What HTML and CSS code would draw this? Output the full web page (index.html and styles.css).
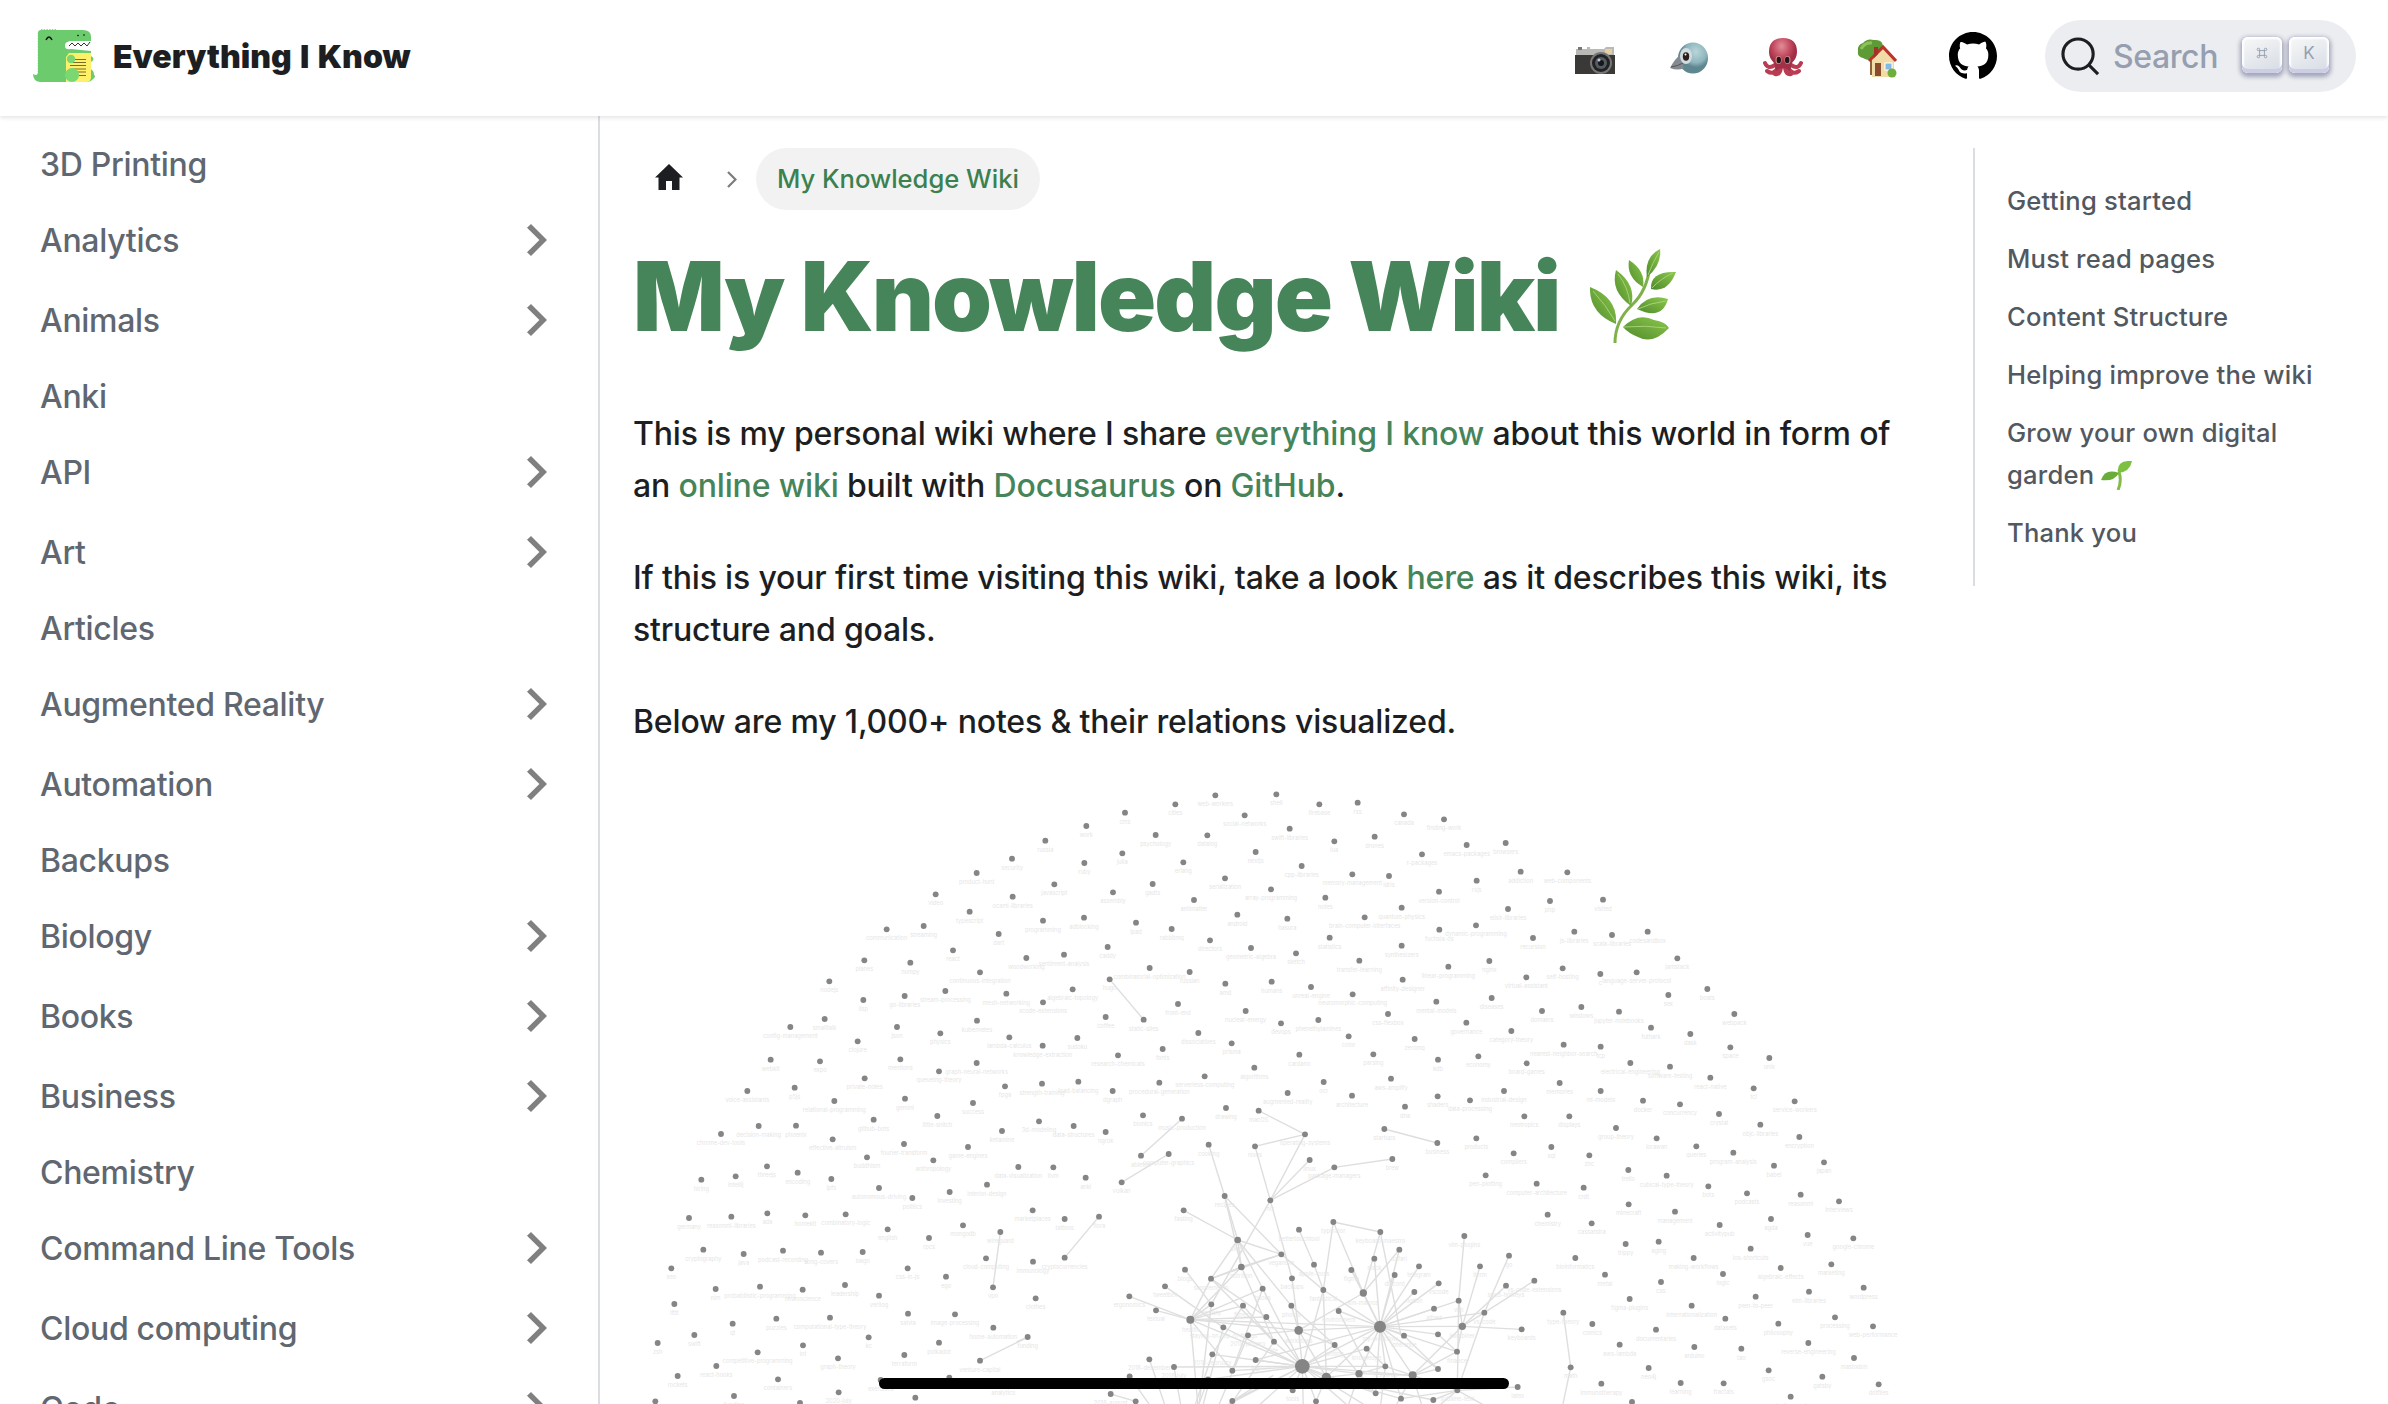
FILE: index.html
```html
<!DOCTYPE html>
<html lang="en">
<head>
<meta charset="utf-8">
<title>My Knowledge Wiki | Everything I Know</title>
<link rel="stylesheet" href="styles.css">
</head>
<body>
<header class="navbar">
  <a class="brand">
    <svg class="logo" viewBox="0 0 64 54">
      <path d="M5 4Q5 1 8 1H50Q58 1 58 8V12H38Q32 13 32 17T38 20L58 22V24H36V53H7Q0 52 0 45Q5 48 5 42Z" fill="#6bcb6d"/>
      <path d="M6 43V3M8 1.500H24" fill="none" stroke="#6bcb6d" stroke-width="2.500" stroke-dasharray="1.500 1.200"/>
      <path d="M58 27Q63 30 58 33ZM57 40Q61 41 61 46Q64 47 59 51Q57 53 52 53Z" fill="#6bcb6d"/>
      <path d="M38 12H58L57 17Q57 19 54 19H38Q32 19 32 16T38 12Z" fill="#fff"/>
      <path d="M36 17l3-3 3 3 3-3 3 3 3-3 3 3 3-4" fill="none" stroke="#333" stroke-width="1"/>
      <path d="M36 24H58V48Q58 53 53 53H33V28Z" fill="#fff06a"/>
      <path d="M37 30.500H53M37 33.500H53M37 36.500H53M38 40H53M44 43H53M46 46.500H53" stroke="#7a6c25" stroke-width="1"/>
      <circle cx="38" cy="30" r="4.200" fill="#7ad873"/><circle cx="39" cy="46" r="7" fill="#7ad873"/>
      <path d="M13 11Q16 5 19 11" fill="none" stroke="#111" stroke-width="1.500"/>
      <circle cx="45" cy="6.500" r=".8"/><circle cx="51" cy="6" r=".8"/>
    </svg>
    <b class="brand-title">Everything I Know</b>
  </a>
  <nav class="nav-icons">
    <svg class="emoji camera" viewBox="0 0 40 28">
      <path d="M1 2H12V0H15V2H29L31 0H39V27H1Z" fill="#b9b9b5"/><path d="M0 8H40V27H0Z" fill="#3a3938"/>
      <rect x="30" y="2" width="7" height="5" fill="#e8cf9d"/><rect x="3" y="0" width="4" height="3" fill="#777"/>
      <circle cx="26" cy="16" r="11" fill="#777"/><circle cx="26" cy="16" r="9" fill="#222"/><circle cx="26" cy="16" r="6" fill="#555b62"/><circle cx="26" cy="16" r="3" fill="#15171b"/><circle cx="24" cy="13" r="1.500" fill="#b9c7d2"/>
    </svg>
    <svg class="emoji bird" viewBox="0 0 38 32">
      <defs><radialGradient id="bird" cx=".6" cy=".3"><stop offset="0" stop-color="#b9d5da"/><stop offset=".7" stop-color="#8fb5bd"/><stop offset="1" stop-color="#5f8790"/></radialGradient></defs>
      <ellipse cx="23" cy="16" rx="15" ry="15.500" fill="url(#bird)"/><path d="M10 13Q4 18 0 26Q8 29 14 26Z" fill="#858a90"/><path d="M1 25Q8 24 13 21" stroke="#555" fill="none"/>
      <ellipse cx="16" cy="14" rx="6" ry="8" fill="#d0dcdf"/><ellipse cx="16" cy="14.500" rx="3.200" ry="4.200" fill="#2b1d1a"/><circle cx="15.500" cy="12.500" r="1" fill="#fff"/>
    </svg>
    <svg class="emoji octopus" viewBox="0 0 40 39">
      <defs><radialGradient id="octo" cx=".45" cy=".25"><stop offset="0" stop-color="#e08e98"/><stop offset=".6" stop-color="#c54c62"/><stop offset="1" stop-color="#a02f48"/></radialGradient></defs>
      <g fill="none" stroke="#b93c53" stroke-linecap="round" stroke-width="4"><path d="M12 27Q5 32 2 25M15 29Q11 38 4 33M18 30Q17 37 12 36M28 27Q35 32 38 25M25 29Q29 38 36 33M22 30Q23 37 28 36"/></g>
      <path d="M6 14Q6 0 20 0T34 14Q34 20 29 25L27 33Q20 27 13 33L11 25Q6 20 6 14Z" fill="url(#octo)"/>
      <ellipse cx="15.500" cy="22" rx="3" ry="4" fill="#d9928c"/><ellipse cx="24.500" cy="22" rx="3" ry="4" fill="#d9928c"/><ellipse cx="15.800" cy="22" rx="2.200" ry="3.300" fill="#24151a"/><ellipse cx="24.200" cy="22" rx="2.200" ry="3.300" fill="#24151a"/>
    </svg>
    <svg class="emoji house" viewBox="0 0 40 39">
      <path d="M13 15H18V36H13Z" fill="#8c6239"/><path d="M1 12Q0 6 6 4Q10-1 17 1Q26 0 26 8Q28 17 19 19Q12 23 6 19Q0 18 1 12Z" fill="#5e9a35"/><path d="M4 10Q8 3 15 4" stroke="#8cc257" stroke-width="3" fill="none"/>
      <path d="M15 20L27 9L37 20V38H15Z" fill="#f1dca7"/><path d="M12 22L26 8L39 22" stroke="#b9352b" stroke-width="3" fill="none"/><path d="M17 8h4v7l-4 4z" fill="#a33329"/>
      <rect x="18" y="24" width="6" height="13" fill="#8a4c2c"/><rect x="28" y="24" width="7" height="7" fill="#83b9e8" stroke="#fff"/><circle cx="35" cy="34" r="4.500" fill="#6fae3c"/>
    </svg>
    <svg class="github" viewBox="0 0 16 16"><path d="M8 0C3.580 0 0 3.580 0 8c0 3.540 2.290 6.530 5.470 7.590.4.070.55-.17.55-.38 0-.19-.01-.82-.01-1.490-2.010.37-2.530-.49-2.690-.94-.09-.23-.48-.94-.82-1.130-.28-.15-.68-.52-.01-.53.63-.01 1.080.58 1.230.82.72 1.210 1.870.87 2.330.66.07-.52.28-.87.51-1.070-1.780-.2-3.640-.89-3.640-3.950 0-.87.31-1.590.82-2.150-.08-.2-.36-1.020.08-2.120 0 0 .67-.21 2.200.82.64-.18 1.320-.27 2-.27s1.360.09 2 .27c1.530-1.040 2.200-.82 2.200-.82.44 1.100.16 1.920.08 2.120.51.56.82 1.270.82 2.150 0 3.070-1.870 3.750-3.650 3.950.29.25.54.73.54 1.480 0 1.070-.01 1.930-.01 2.200 0 .21.15.46.55.38A8.010 8.010 0 0 0 16 8c0-4.420-3.580-8-8-8z"/></svg>
  </nav>
  <div class="search">
    <svg class="search-icon" viewBox="0 0 40 40"><circle cx="17.500" cy="17.500" r="15.500"/><path d="M28.500 28.500L38 38"/></svg>
    <span class="search-label">Search</span>
    <kbd class="key"><svg viewBox="0 0 15 15" width="12" height="12"><path d="M4.500 4.500V3A1.500 1.500 0 1 0 3 4.500h9A1.500 1.500 0 1 0 10.500 3v9a1.500 1.500 0 1 0 1.500-1.500H3A1.500 1.500 0 1 0 4.500 12z" fill="none" stroke="#969faf" stroke-width="1.200"/></svg></kbd>
    <kbd class="key">K</kbd>
  </div>
</header>
<div class="layout">
  <aside class="sidebar">
    <ul class="menu">
      <li class="item">3D Printing</li>
      <li class="item category">Analytics</li>
      <li class="item category">Animals</li>
      <li class="item">Anki</li>
      <li class="item category">API</li>
      <li class="item category">Art</li>
      <li class="item">Articles</li>
      <li class="item category">Augmented Reality</li>
      <li class="item category">Automation</li>
      <li class="item">Backups</li>
      <li class="item category">Biology</li>
      <li class="item category">Books</li>
      <li class="item category">Business</li>
      <li class="item">Chemistry</li>
      <li class="item category">Command Line Tools</li>
      <li class="item category">Cloud computing</li>
      <li class="item category">Code</li>
    </ul>
  </aside>
  <main class="article">
    <nav class="breadcrumbs">
      <svg class="home" viewBox="0 0 28 26"><path d="M14 0L28 13.500H24.500V26H17V17H11V26H3.500V13.500H0Z" fill="#1c1e21"/></svg>
      <svg class="crumb-sep" viewBox="0 0 10 17"><path d="M1 1l7.500 7.500L1 16" fill="none" stroke="#7c7c7c" stroke-width="2.200"/></svg>
      <span class="crumb">My Knowledge Wiki</span>
    </nav>
    <h1 class="title">My Knowledge Wiki
      <svg class="herb" viewBox="0 0 86 94">
        <defs><linearGradient id="leaf" x1="1" y1="0" x2="0" y2="1"><stop offset="0" stop-color="#8cc84b"/><stop offset="1" stop-color="#4f8a2c"/></linearGradient></defs>
        <path d="M25 94Q25 72 42 56Q57 42 60 17" fill="none" stroke="#7fb04b" stroke-width="3"/>
        <g fill="url(#leaf)"><path d="M70 0Q54 8 57 28Q72 16 70 0Z"/><path d="M39 11Q36 28 53 38Q56 22 39 11Z"/><path d="M26 21Q20 42 41 57Q47 36 26 21Z"/><path d="M0 38Q-1 64 26 75Q28 49 0 38Z"/><path d="M86 23Q60 22 61 40Q78 44 86 23Z"/><path d="M78 50Q58 44 47 60Q72 72 78 50Z"/><path d="M33 78Q48 63 64 71Q76 73 79 79Q63 96 48 88Q38 84 33 78Z"/></g>
        <path d="M34 78Q56 76 76 79M3 42Q16 56 25 72M28 25Q38 38 40 54M48 60Q60 54 76 52M62 39Q70 30 83 24M58 26Q62 15 69 3" fill="none" stroke="#a6d178" stroke-width="1"/>
      </svg>
    </h1>
    <p>This is my personal wiki where I share <a>everything I know</a> about this world in form of an <a>online wiki</a> built with <a>Docusaurus</a> on <a>GitHub</a>.</p>
    <p>If this is your first time visiting this wiki, take a look <a>here</a> as it describes this wiki, its structure and goals.</p>
    <p>Below are my 1,000+ notes &amp; their relations visualized.</p>
    <svg class="graph" id="graph" viewBox="633 770 1270 634"></svg>
  </main>
  <aside class="toc">
    <ul class="toc-list">
      <li>Getting started</li>
      <li>Must read pages</li>
      <li>Content Structure</li>
      <li>Helping improve the wiki</li>
      <li>Grow your own digital garden <svg class="seedling" viewBox="0 0 31 29"><path d="M17 29Q21 20 18 11" fill="none" stroke="#86b94a" stroke-width="3"/><path d="M31 0Q15-1 17 12Q29 11 31 0Z" fill="#7cc142"/><path d="M18 12Q4 7 0 19Q13 21 18 12Z" fill="#69ac38"/></svg></li>
      <li>Thank you</li>
    </ul>
  </aside>
</div>
<div class="home-indicator"></div>
<script src="graph.js"></script>
</body>
</html>
```
FILE: styles.css
```css
* { box-sizing: border-box; }
html { height: 100%; overflow: hidden; }
body {
  margin: 0;
  height: 1404px;
  overflow: hidden;
  background: #fff;
  color: #1c1e21;
  font-family: Inter, "Liberation Sans", sans-serif;
  font-size: 32px;
  font-weight: 550;
  line-height: 52px;
}
ul { list-style: none; margin: 0; padding: 0; }
svg { display: block; flex: none; }
.navbar {
  position: relative;
  display: flex;
  align-items: center;
  height: 116px;
  padding: 0 32px 4px 33px;
  background: #fff;
  box-shadow: 0 2px 4px rgba(0, 0, 0, .1);
}
.brand { display: flex; align-items: center; gap: 16px; }
.logo { width: 64px; height: 54px; }
.brand-title { padding-top: 2px; font-weight: 900; letter-spacing: 0; word-spacing: 2px; white-space: nowrap; }
.nav-icons { display: flex; align-items: center; margin-left: auto; margin-right: 48px; }
.emoji { width: 40px; }
.camera { height: 28px; margin: 9px 55px 0 0; }
.bird { width: 38px; height: 32px; margin: 3px 55px 0 0; }
.octopus { height: 39px; margin: 3px 54px 0 0; }
.house { height: 39px; margin: 4px 52px 0 0; }
.github { width: 48px; height: 48px; }
.search {
  display: flex;
  align-items: center;
  width: 311px;
  height: 72px;
  padding: 0 27px 0 16px;
  border-radius: 36px;
  background: #ebedf0;
}
.search-icon { width: 39px; height: 39px; fill: none; stroke: #1c1e21; stroke-width: 3.2; }
.search-label { margin: 0 auto 0 13px; padding-top: 2px; color: #969faf; letter-spacing: -.4px; }
.key {
  display: flex;
  align-items: center;
  justify-content: center;
  width: 40px;
  height: 36px;
  margin: 0 0 3px 7px;
  padding-bottom: 4px;
  border-radius: 6px;
  color: #969faf;
  font: 400 17px Inter, sans-serif;
  background: linear-gradient(-26deg, #d5dbe4, #f8f8f8);
  box-shadow: inset 0 -4px 0 #cdcde6, inset 0 0 2px 2px #fff, 0 2px 4px 2px rgba(30, 35, 90, .35);
}
.layout { display: flex; height: 1288px; }
.sidebar { width: 600px; padding: 17px 16px 0; border-right: 2px solid #dadde1; flex: none; }
.item {
  display: flex;
  align-items: center;
  justify-content: space-between;
  height: 64px;
  margin-bottom: 8px;
  padding: 0 24px;
  color: #606770;
  letter-spacing: -.3px;
  white-space: nowrap;
}
.category { height: 72px; padding-right: 35px; }
.category::after {
  content: "";
  width: 20px;
  height: 32px;
  margin-top: -2px;
  background: #808080;
  clip-path: polygon(0 12%, 20% 0, 100% 50%, 20% 100%, 0 88%, 62% 50%);
}
.article { width: 1374px; flex: none; padding: 32px 33px 0; }
.breadcrumbs { display: flex; align-items: center; height: 62px; padding-left: 22px; }
.home { width: 28px; height: 26px; margin-bottom: 4px; }
.crumb-sep { width: 10px; height: 17px; margin: 1px 19px 0 44px; }
.crumb {
  height: 62px;
  padding: 0 21px;
  border-radius: 31px;
  background: #f2f2f2;
  color: #3b8150;
  font-size: 25.600px;
  letter-spacing: -.02px;
  line-height: 62px;
}
.title {
  display: flex;
  gap: 30px;
  margin: 26px 0 52px;
  color: #468559;
  font-size: 96px;
  font-weight: 900;
  letter-spacing: -1.9px;
  line-height: 120px;
  white-space: nowrap;
}
.herb { width: 86px; height: 94px; margin-top: 13px; }
.article p { width: 1275px; margin: 0 0 40px; letter-spacing: -.16px; }
.article a { color: #468559; }
.graph { width: 1270px; height: 634px; margin-top: -18px; }
.edges { fill: none; stroke: #dedede; stroke-width: 1.400; }
.nodes { fill: #858585; }
.labels { fill: #e6e6e6; font-size: 5.700px; font-weight: 400; text-anchor: middle; }
.toc { width: 414px; padding-top: 32px; flex: none; }
.toc-list {
  display: flex;
  flex-direction: column;
  gap: 16px;
  height: 438px;
  margin-left: -1px;
  padding: 32px 56px 0 32px;
  border-left: 2px solid #dadde1;
  color: #525860;
  font-size: 25.600px;
  letter-spacing: .2px;
  line-height: 42px;
}
.seedling { display: inline-block; width: 31px; height: 29px; vertical-align: -6px; }
.home-indicator {
  position: fixed;
  left: 879px;
  bottom: 15px;
  width: 630px;
  height: 11px;
  border-radius: 6px;
  background: #000;
}
```
FILE: graph.js
```js
// Note graph. Each cell has its own origin; coordinates are thirds of a pixel.
const cells = [
  { x: 600, y: 760, nodes: `1236 296 security|1130 339 product-hunt|1007 403 video|1238 410 ocaml-libraries|1109 455 typescript|860 508 communication|971 498 streaming|1196 522 dart|1059 571 react|793 601 planes|931 608 numpy|1140 637 continuous-integration|688 664 nodejs|790 720 lisp|914 708 go-libraries|1036 693 stream-processing|1219 701 mesh-networking|571 801 config-management|674 777 smalltalk|891 801 json|1131 782 kubernetes|1021 820 physics|773 844 clojure|1228 832 lambda-calculus|512 899 webkit|660 904 expo|901 898 mentions|1130 909 graph-neural-networks|1017 934 queueing-theory|794 955 private-notes` },
  { x: 1020, y: 760, nodes: `586 106 web-workers|769 103 shell|466 133 cities|898 133 firebase|1013 128 rss|315 158 cms|674 166 social-networks|1152 163 canada|199 198 work|809 206 swift-libraries|407 225 psychology|562 226 datalog|1064 230 drones|76 242 russia|943 244 lua|307 280 julia|707 276 nextjs|1206 283 r-packages|193 309 ruby|490 307 erlang|845 318 cpp-libraries|997 343 memory-management|1107 348 idris|615 355 serialization|103 373 javascript|398 372 gadts|753 388 array-programming|279 397 assembly|1257 395 version-control|522 420 antimatter|916 413 notes|1145 443 quantum-physics|652 464 android|192 473 adblocking|69 482 programming|802 476 hasura|1034 472 brain-computer-interfaces|348 488 ipad|455 507 rabbitmq|1258 509 fuchsia-os|929 533 statistics|570 541 directors|263 561 caddy|693 564 geometric-algebra|1145 557 synthesizers|132 584 sentiment-analysis|19 594 woodworking|828 580 sketch|1018 602 transfer-learning|389 624 combinatorial-optimization|509 636 russian|269 658 hugo|616 671 amd|755 665 humans|1148 659 affinity-designer|873 681 unreal-engine|158 688 algebraic-topology|998 703 neuromorphic-computing|69 727 xcode-extensions|474 732 front-end|1249 725 mental-models|677 753 nuclear-energy|1104 762 css-flexbox|257 771 coffee|371 779 static-sites|895 780 phenethylamines|783 790 devops|535 819 dissociatives|986 829 color|172 834 sudoku|1184 837 zeromq|635 850 prisma|68 857 knowledge-extraction|428 867 fonts|838 884 cardano|1060 883 parsing|294 886 research-chemicals|1254 899 kdb|703 923 algorithms|554 949 serverless-computing|1113 956 aws-amplify`, edges: `269 658 371 779` },
  { x: 1440, y: 760, nodes: `12 178 finding-work|80 255 emacs-packages|197 249 browsers|242 335 addiction|382 337 web-components|110 362 rxjs|330 423 php|489 419 visited|204 447 elixir-libraries|108 496 dynamic-programming|403 515 js-libraries|516 525 scala-libraries|623 515 codesandbox|279 534 recursion|712 595 jamstack|148 603 nginx|25 620 linear-programming|368 625 self-hosting|481 642 c|590 637 language-server-protocol|259 652 virtual-assistant|802 687 boats|685 705 sex|155 714 diseases|424 741 windows|306 753 domains|537 755 jupyter-notebooks|883 762 webpack|79 788 governance|633 803 futhark|214 813 category-theory|751 822 dask|371 854 nearest-neighbor-search|482 860 tcp|871 862 space|115 889 economy|988 894 unix|260 910 board-games|571 909 electrical-engineering|690 920 software-testing|811 953 react-native` },
  { x: 600, y: 1082, nodes: `442 27 voice-assistants|584 17 p5js|1215 13 fpga|703 57 relational-programming|915 50 gemini|1119 63 success|1012 102 little-snitch|821 113 github-bots|476 132 decision-making|588 131 phoenix|363 156 chrome-dev-tools|1206 147 ketamine|698 172 effective-altruism|912 186 fourier-transform|1104 195 game-engines|801 226 buddhism|1000 235 anthropology|501 253 threejs|1255 255 data-visualization|593 272 encoding|407 283 intellij|304 293 hiring|694 291 ipfs|1161 308 interior-design|837 318 autonomous-driving|1049 330 investing|937 348 politics|502 394 ada|616 400 homekit|737 397 combinatory-logic|394 404 reasonml-libraries|267 408 germany|1089 430 mongodb|863 442 english|1201 450 wireguard|987 468 rpcs|310 503 cryptography|549 506 podcast-recording|788 510 swgo|663 512 song-covers|431 516 java|1158 529 cloud-computing|214 559 seo|923 559 css-in-js|1038 584 ego|735 609 leadership|480 614 probabilistic-programming|1179 616 vpn|347 621 nim|608 623 neuroscience|837 641 verilog|223 666 ifttt|924 695 salvia|1065 697 image-processing|690 707 computational-type-theory|529 710 puzzles|398 725 qt|1180 737 home-automation|283 759 swift|806 766 kc|173 783 zsh|1017 782 polkadot|609 790 iot|473 811 competitive-programming|913 819 terraform|714 829 graph-theory|1140 836 venture-capital|349 852 react-hooks|233 882 rockets|534 892 containers|842 894 exercises|1048 887 music|716 931 2020-july|402 942 funding|946 947 |166 958 |600 963 |1210 905 analytics`, edges: `1201 450 1179 616 1140 836 1283 766` },
  { x: 1440, y: 1082, nodes: `359 3 memories|192 27 industrial-design|482 27 ml-models|941 19 tcl|90 55 data-processing|609 56 docker|1064 58 service-workers|720 67 concurrency|837 96 crystal|253 103 neotropics|388 103 displays|961 128 objc-libraries|528 138 group-theory|109 169 products|650 169 lorawan|1078 165 encryption|334 195 sql|769 193 queries|221 214 compilers|880 212 program-analysis|448 220 znc|1152 241 japan|1002 251 babel|565 264 trello|137 280 pen-plotting|680 281 cubical-type-theory|290 305 computer-architecture|431 317 crdt|805 313 bots|921 334 podcasts|1082 338 reasonml|1197 358 interviews|566 367 minecraft|705 389 management|323 398 chemistry|993 411 agda|455 424 cassandra|839 429 activitypub|1103 459 vue|73 462 vim-plugins|1240 469 google-chrome|656 479 aging|557 486 trippy|932 500 ios-shortcuts|207 521 go|406 528 bioinformatics|761 528 making-workflows|120 553 iterm|1174 547 marketing|1022 558 algebraic-effects|849 576 logic|495 578 metal|283 596 vs-code-extensions|663 600 css|198 611 sped-hotkeys|1271 617 wordpress|1107 629 elm-libraries|569 651 figma-plugins|947 644 peer-to-peer|56 656 vim|755 671 internationalization|370 692 type-theory|133 692 vs-code|1185 706 processing|856 710 datasets|1015 725 philosophy|457 726 comics|67 733 karabiner 11|1299 733 web-performance|245 742 keyboards|648 743 documentaries|1105 783 reverse-engineering|539 788 aws-lambda|763 795 arduino|904 800 tao|51 809 finance|1242 828 mastodon|626 858 neo4j|392 856 math|986 865 gsoc|1147 884 gatsby|484 905 immunotherapy|722 903 learning|851 904 fractals|1316 907 dotfiles|233 915 latex|1052 944 elasticsearch|52 925 sublime-text|576 960 `, edges: `370 692 392 856 392 856 365 985` },
  { x: 1020, y: 1082, nodes: `66 5 strength-training|175 -1 load-balancing|418 2 procedural-generation|911 0 ocr|278 27 dgraph|803 33 augmented-reality|996 41 architecture|1253 43 shaders|1155 74 dna|618 78 drawing|716 86 macOS|369 100 bionics|486 110 music-production|57 118 3d-modeling|161 132 data-structures|1093 141 startups|257 150 ngrok|855 157 operating-systems|566 188 cooking|705 193 nixos|1252 183 business|363 221 ableton|446 216 computer-graphics|869 234 linux|1117 231 brew|943 256 package-managers|100 256 llvm|197 287 anki|305 301 vulkan|614 342 recipes|751 355 nix|38 385 marketplaces|491 385 fasting|134 411 tattoos|237 404 flora|837 443 bettertouchtool|940 420 typinator|1081 450 keyboard-maestro|653 474 sleep 10|1138 503 safari|784 517 veganism|134 527 cryptocurrencies|39 539 immunology|1063 530 slack|882 548 apple-tools|1197 553 telegram|664 555 nutrition 10|495 563 blogs|994 564 figma|1124 579 discord|573 590 supplements|816 589 backups|1256 604 vscode|435 613 tweetbot|728 620 books|910 624 fantastical|1183 630 notion|1030 633 km-macros 11|47 649 clothes|328 643 ergonomics|574 667 anxiety|669 671 fitness|814 671 photos|1242 680 alfred|408 685 textual|956 687 environment|739 705 |511 713 health 12|610 736 staying-on-top-of-things|1080 734 my-workflow 18|836 745 workflows 13|684 760 2018-january|1152 761 inference|23 765 funding|1254 757 |762 779 life|944 789 writing|1040 800 knowledge|577 817 2018-february|388 832 2018-december|707 834 pip|847 853 2018 22|462 855 2018-july|637 866 |1096 853 research|1017 875 articles 11|1178 880 mac 12|1254 861 |919 886 tools 14|329 883 2018|564 892 |272 936 2018-august|818 925 tools|1067 934 |347 958 |637 957 2018-april|888 958 |1143 950 |1240 954 `, edges: `716 86 855 157 705 193 855 157 705 193 751 355 855 157 751 355 869 234 751 355 943 256 751 355 943 256 1117 231 1093 141 1252 183 486 110 363 221 446 216 305 301 237 404 134 527 23 765 -10 780 566 188 614 342 614 342 653 474 614 342 664 555 614 342 784 517 491 385 653 474 751 355 816 589 751 355 574 667 653 474 784 517 653 474 664 555 653 474 728 620 653 474 573 590 653 474 814 671 664 555 784 517 664 555 573 590 664 555 762 779 664 555 511 713 784 517 910 624 784 517 573 590 573 590 511 713 573 590 739 705 573 590 762 779 495 563 574 667 435 613 610 736 328 643 511 713 408 685 511 713 511 713 728 620 511 713 739 705 511 713 836 745 511 713 1080 734 511 713 847 853 511 713 574 667 511 713 669 671 511 713 535 985 511 713 637 866 574 667 535 985 728 620 637 866 728 620 847 853 669 671 762 779 669 671 577 817 739 705 847 853 610 736 847 853 610 736 545 985 684 760 590 985 684 760 836 745 762 779 847 853 837 443 882 548 882 548 910 624 940 420 910 624 940 420 1030 633 940 420 1081 450 1081 450 1030 633 1081 450 1143 761 1138 503 1030 633 1138 503 1080 734 1063 530 1080 734 994 564 1030 633 994 564 1080 734 1124 579 1080 734 1197 553 1080 734 1256 604 1080 734 1183 630 1080 734 1242 680 1080 734 1030 633 1080 734 1030 633 836 745 910 624 1080 734 910 624 919 886 910 624 847 853 816 589 836 745 814 671 836 745 814 671 944 789 956 687 1080 734 956 687 1040 853 836 745 847 853 836 745 919 886 836 745 1080 734 836 745 944 789 1080 734 847 853 1080 734 919 886 1080 734 1017 875 1080 734 1096 853 1080 734 1178 880 1080 734 1152 761 1080 734 1254 757 1080 734 1254 861 1080 734 1327 733 1080 734 1316 656 1080 734 1393 692 1080 734 1311 809 1080 734 1143 950 1080 734 1067 934 1080 734 707 834 847 853 637 866 847 853 707 834 847 853 577 817 847 853 462 855 847 853 564 892 847 853 637 957 847 853 919 886 847 853 1017 875 847 853 1096 853 847 853 1178 880 847 853 818 925 847 853 888 958 847 853 1067 934 847 853 1040 800 847 853 944 789 847 853 590 985 847 853 700 985 847 853 1000 985 847 853 1060 985 847 853 850 985 388 832 440 985 462 855 485 985 329 883 400 985 272 936 347 958 577 817 520 985 564 892 530 985 637 957 760 880 762 779 620 985 944 789 1017 875 1017 875 919 886 1017 875 1178 880 1017 875 1096 853 1178 880 1096 853 1178 880 1254 861 1178 880 1311 809 1178 880 1210 985 1178 880 1120 985 1096 853 1080 985 1017 875 1067 934 1017 875 980 985 1040 800 1096 853 1152 761 1254 861 919 886 888 958 919 886 1143 950 919 886 1240 954 1254 757 1311 809 1333 462 1316 656 1380 553 1327 733 1467 521 1393 692 1458 611 1327 733 1543 596 1393 692 1393 692 1327 733 1505 742 1327 733 1316 656 1327 733 1311 809 1327 733 1393 692 1312 925 1316 656 1312 925 1327 733 1178 880 1178 880 1312 925 1493 915 1312 925 1312 925 1420 985 1312 925 1240 954 1312 925 1240 985 1312 925 1143 950` }
];

const ns = 'http://www.w3.org/2000/svg';
const graph = document.getElementById('graph');
function add(parent, tag, attrs, text) {
  const el = document.createElementNS(ns, tag);
  for (const k in attrs) el.setAttribute(k, attrs[k]);
  if (text) el.textContent = text;
  parent.appendChild(el);
  return el;
}
const edges = add(graph, 'g', { class: 'edges' });
const labels = add(graph, 'g', { class: 'labels' });
const nodes = add(graph, 'g', { class: 'nodes' });
for (const cell of cells) {
  const px = v => cell.x + v / 3;
  const py = v => cell.y + v / 3;
  const e = (cell.edges || '').split(' ').filter(Boolean).map(Number);
  for (let i = 0; i < e.length; i += 4) {
    add(edges, 'path', { d: `M${px(e[i])} ${py(e[i + 1])}L${px(e[i + 2])} ${py(e[i + 3])}` });
  }
  for (const item of cell.nodes.split('|')) {
    const [x, y, name, size] = item.split(' ');
    const r = (size || 8.8) / 3;
    add(nodes, 'circle', { cx: px(+x), cy: py(+y), r });
    if (name) add(labels, 'text', { x: px(+x), y: py(+y) + r + 8 }, name);
  }
}
```
